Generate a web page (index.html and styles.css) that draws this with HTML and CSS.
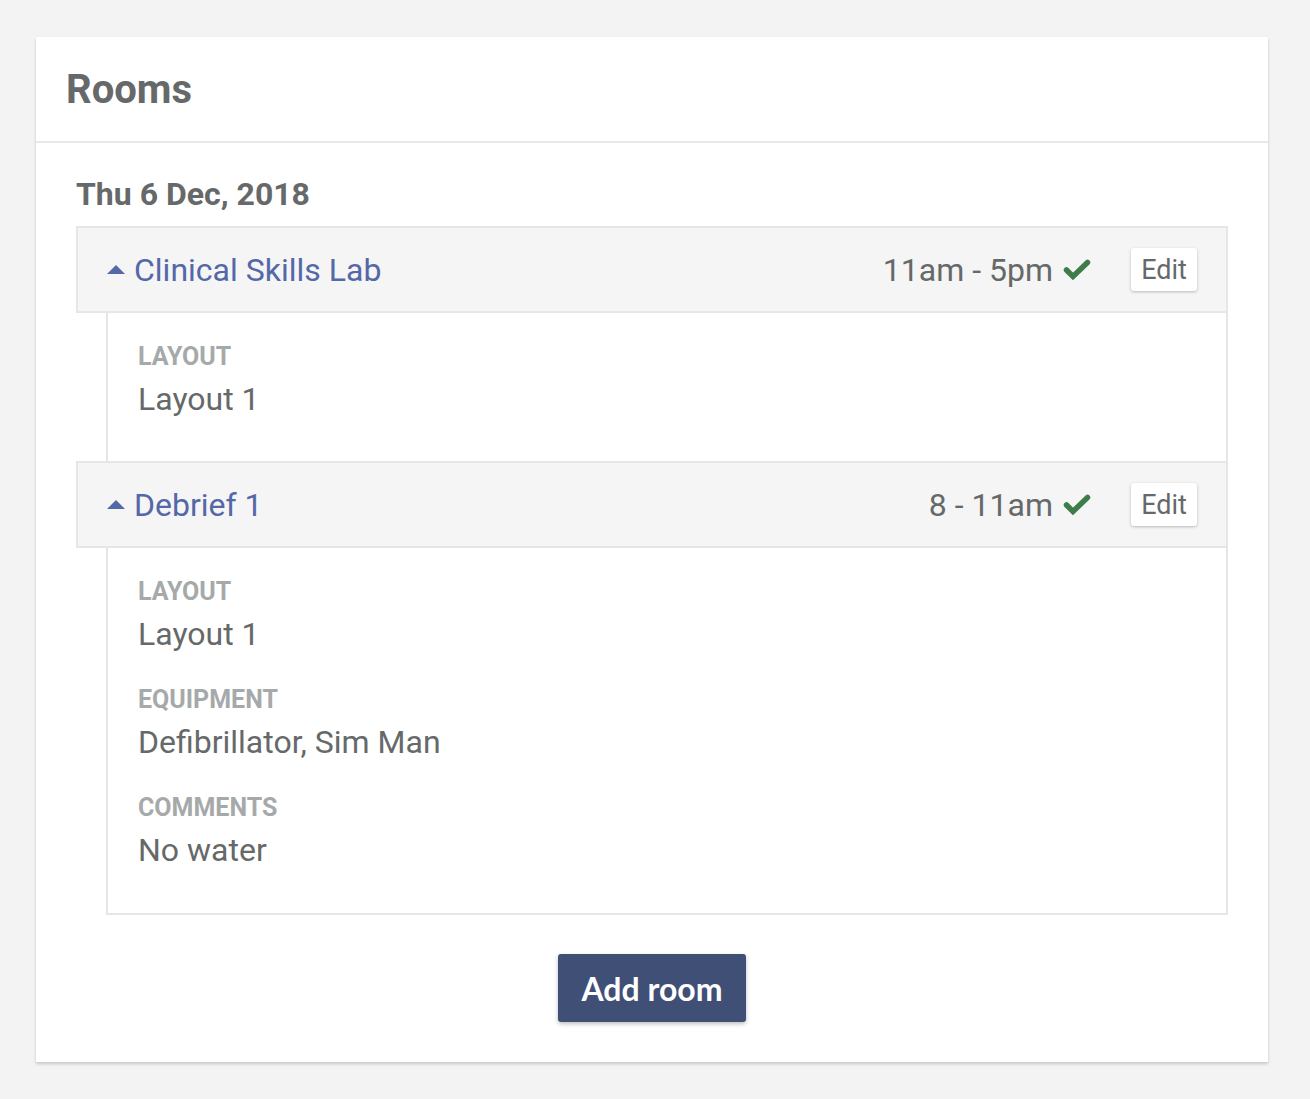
FILE: index.html
```html
<!DOCTYPE html>
<html>
<head>
<meta charset="utf-8">
<link rel="stylesheet" href="styles.css">
</head>
<body>
<div class="card">
  <div class="card-header"><h1>Rooms</h1></div>
  <div class="card-body">
    <div class="date">Thu 6 Dec, 2018</div>
    <div class="room">
      <div class="room-head">
        <span class="caret"></span>
        <span class="room-name">Clinical Skills Lab</span>
        <span class="time">11am - 5pm</span>
        <svg class="check" viewBox="0 0 28 22" width="28" height="22"><path d="M3.5 11 L10 17.5 L24.5 3.5" fill="none" stroke="#3e7d4b" stroke-width="5.5" stroke-linecap="round" stroke-linejoin="miter"/></svg>
        <button class="edit">Edit</button>
      </div>
      <div class="room-body">
        <div class="field"><div class="label">Layout</div><div class="value">Layout 1</div></div>
      </div>
    </div>
    <div class="room">
      <div class="room-head">
        <span class="caret"></span>
        <span class="room-name">Debrief 1</span>
        <span class="time">8 - 11am</span>
        <svg class="check" viewBox="0 0 28 22" width="28" height="22"><path d="M3.5 11 L10 17.5 L24.5 3.5" fill="none" stroke="#3e7d4b" stroke-width="5.5" stroke-linecap="round" stroke-linejoin="miter"/></svg>
        <button class="edit">Edit</button>
      </div>
      <div class="room-body last">
        <div class="field"><div class="label">Layout</div><div class="value">Layout 1</div></div>
        <div class="field"><div class="label">Equipment</div><div class="value">Defibrillator, Sim Man</div></div>
        <div class="field"><div class="label">Comments</div><div class="value">No water</div></div>
      </div>
    </div>
    <div class="actions"><button class="add">Add room</button></div>
  </div>
</div>
</body>
</html>
```

FILE: styles.css
```css
* { box-sizing: border-box; }
html, body { margin: 0; background: #f3f3f3; }
body {
  padding: 37px 42px 38px 36px;
  font-family: Roboto, "Liberation Sans", sans-serif;
  color: #666969;
}
.card {
  background: #fff;
  box-shadow: 0 2px 3px rgba(0,0,0,0.18);
}
.card-header {
  height: 106px;
  border-bottom: 2px solid #e8e8e8;
  padding: 0 30px;
  display: flex;
  align-items: center;
}
.card-header h1 {
  margin: 0;
  font-size: 40px;
  font-weight: 700;
  color: #666969;
}
.card-body {
  padding: 32px 40px 40px 40px;
}
.date {
  font-size: 32px;
  font-weight: 700;
  line-height: 38px;
  margin-bottom: 13px;
}
.room-head {
  height: 87px;
  background: #f5f5f5;
  border: 2px solid #e6e6e6;
  display: flex;
  align-items: center;
  padding: 0 29px 0 29px;
}
.caret {
  width: 0; height: 0;
  border-left: 9px solid transparent;
  border-right: 9px solid transparent;
  border-bottom: 9px solid #5468a8;
  margin-right: 9px;
}
.room-name {
  font-size: 32px;
  color: #5468a8;
  flex: 1;
}
.time {
  font-size: 32px;
  color: #666969;
  margin-right: 10px;
}
.check { margin-right: 40px; }
.edit {
  font-family: Roboto, "Liberation Sans", sans-serif;
  font-size: 27px;
  color: #666969;
  background: #fff;
  border: none;
  border-radius: 3px;
  box-shadow: 0 1px 3px rgba(0,0,0,0.25);
  height: 43px;
  width: 66px;
  padding: 0;
}
.room-body {
  margin-left: 30px;
  border-left: 2px solid #e6e6e6;
  border-right: 2px solid #e6e6e6;
  padding: 30px 30px 28px 30px;
  height: 148px;
}
.room-body.last {
  height: auto;
  border-bottom: 2px solid #e6e6e6;
  padding-bottom: 43px;
}
.field + .field { margin-top: 32px; }
.label {
  font-size: 25px;
  font-weight: 700;
  text-transform: uppercase;
  color: #a6a9a9;
  line-height: 28px;
}
.value {
  font-size: 32px;
  line-height: 40px;
  margin-top: 8px;
}
.actions {
  display: flex;
  justify-content: center;
  padding-top: 39px;
}
.add {
  font-family: Lato, "Open Sans", sans-serif;
  font-weight: 700;
  font-size: 32px;
  color: #fff;
  background: #3f4f75;
  border: none;
  border-radius: 3px;
  height: 68px;
  width: 188px;
  padding: 0;
  box-shadow: 0 2px 4px rgba(0,0,0,0.25);
}
```
